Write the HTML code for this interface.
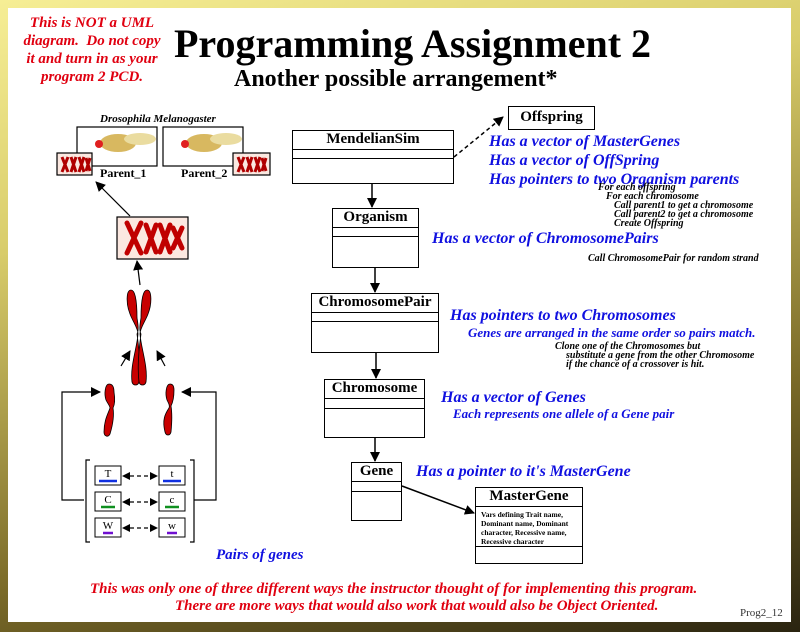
<!DOCTYPE html>
<html><head><meta charset="utf-8"><style>
html,body{margin:0;padding:0}
body{width:800px;height:632px;position:relative;overflow:hidden;background:linear-gradient(165deg,#f6ee95 0%,#d8cc6a 30%,#7a6a28 70%,#2a2410 100%);font-family:"Liberation Serif",serif}
#w{position:absolute;left:8px;top:8px;width:783px;height:614px;background:#fff}
.t{position:absolute;white-space:nowrap;font-weight:bold}
.bi{font-style:italic;font-weight:bold}
.blue{color:#1010e0}
.red{color:#e00010}
.box{position:absolute;border:1.5px solid #000;background:#fff;box-sizing:border-box}
.box .h{border-bottom:1.5px solid #000;text-align:center;font-weight:bold;font-size:15px;line-height:17px}
.box .m{border-bottom:1.5px solid #000}
.sm{font-size:10px;font-style:italic;font-weight:bold;line-height:10px}
</style></head><body>
<div id="w"></div>
<div class="t red bi" style="left:18px;top:14px;width:148px;text-align:center;font-size:15px;line-height:18px;white-space:normal">This is NOT a UML diagram.&nbsp; Do not copy it and turn in as your program 2 PCD.</div>
<div class="t" style="left:174px;top:21px;font-size:40px;line-height:46px">Programming Assignment 2</div>
<div class="t" style="left:234px;top:66px;font-size:24px;line-height:26px">Another possible arrangement*</div>

<svg style="position:absolute;left:0;top:0" width="800" height="632">
<defs><marker id="a" markerWidth="10" markerHeight="10" refX="9" refY="5" orient="auto" markerUnits="userSpaceOnUse"><path d="M0,0L10,5L0,10z" fill="#000"/></marker></defs>
<line x1="372" y1="183" x2="372" y2="207" stroke="#000" stroke-width="1.5" marker-end="url(#a)"/>
<line x1="375" y1="267" x2="375" y2="292" stroke="#000" stroke-width="1.5" marker-end="url(#a)"/>
<line x1="376" y1="352" x2="376" y2="378" stroke="#000" stroke-width="1.5" marker-end="url(#a)"/>
<line x1="375" y1="437" x2="375" y2="461" stroke="#000" stroke-width="1.5" marker-end="url(#a)"/>
<line x1="402" y1="486" x2="474" y2="513" stroke="#000" stroke-width="1.5" marker-end="url(#a)"/>
<line x1="454" y1="157" x2="503" y2="117" stroke="#000" stroke-width="1.5" stroke-dasharray="4,3" marker-end="url(#a)"/>
<rect x="77" y="127" width="80" height="39" fill="#fff" stroke="#000" stroke-width="1.2"/>
<rect x="163" y="127" width="80" height="39" fill="#fff" stroke="#000" stroke-width="1.2"/>
<g fill="#d8b860"><ellipse cx="118" cy="143" rx="18" ry="9"/><ellipse cx="140" cy="139" rx="16" ry="6" fill="#eadca0"/><circle cx="99" cy="144" r="4" fill="#e02020"/><ellipse cx="204" cy="143" rx="18" ry="9"/><ellipse cx="226" cy="139" rx="16" ry="6" fill="#eadca0"/><circle cx="185" cy="144" r="4" fill="#e02020"/></g>
<rect x="57" y="153" width="35" height="22" fill="#fbe8e0" stroke="#000" stroke-width="1.2"/>
<rect x="233" y="153" width="37" height="22" fill="#fbe8e0" stroke="#000" stroke-width="1.2"/>
<g stroke="#b00000" stroke-width="3"><path d="M62,157l6,15M68,157l-6,15M71,157l5,15M76,157l-5,15M79,157l5,15M84,157l-5,15M86,158l4,13M90,158l-4,13"/><path d="M238,157l6,15M244,157l-6,15M247,157l5,15M252,157l-5,15M255,157l5,15M260,157l-5,15M262,158l4,13M266,158l-4,13"/></g>
<line x1="130" y1="216" x2="96" y2="182" stroke="#000" stroke-width="1.2" marker-end="url(#a)"/>
<rect x="117" y="217" width="71" height="42" fill="#fbe8e0" stroke="#000" stroke-width="1.2"/>
<g stroke="#c00000" stroke-width="5" stroke-linecap="round"><path d="M127,223l14,30M141,223l-14,30M146,225l10,27M156,225l-10,27M160,225l10,27M170,225l-10,27M173,228l9,20M182,228l-9,20"/></g>
<line x1="140" y1="285" x2="137" y2="261" stroke="#000" stroke-width="1.2" marker-end="url(#a)"/>
<g fill="#c80000" stroke="#000" stroke-width=".8">
<path d="M131,290c-5,0-5,14-1,24c3,8 8,14 8,20c-1,14-8,32-6,48c1,4 6,4 7,0c2-16 0-34-2-48c2-4 1-10 0-16c0-12-1-28-6-28z"/>
<path d="M147,290c5,0 5,14 1,24c-3,8-8,14-8,20c1,14 8,32 6,48c-1,4-6,4-7,0c-2-16 0-34 2-48c-2-4-1-10 0-16c0-12 1-28 6-28z"/>
</g>
<line x1="121" y1="366" x2="130" y2="351" stroke="#000" stroke-width="1.2" marker-end="url(#a)"/>
<line x1="165" y1="366" x2="157" y2="351" stroke="#000" stroke-width="1.2" marker-end="url(#a)"/>
<g fill="#c80000" stroke="#000" stroke-width=".8"><path d="M109,384c-4,0-5,10-3,16c2,4 4,6 4,8c-2,6-6,12-6,24c0,4 4,6 6,2c3-10 4-20 3-26c2-4 2-10 1-16c0-6-2-8-5-8z"/><path d="M170,384c-4,0-5,10-3,16c2,4 3,6 2,8c-4,6-7,12-4,24c1,4 5,4 6,0c1-10 1-20 0-26c2-4 3-10 3-16c0-4-1-6-4-6z"/></g>
<path d="M84,500H62V392H100" fill="none" stroke="#000" stroke-width="1.2" marker-end="url(#a)"/>
<path d="M194,500H216V392H182" fill="none" stroke="#000" stroke-width="1.2" marker-end="url(#a)"/>
<path d="M90,460H86V542H90M190,460H194V542H190" fill="none" stroke="#000" stroke-width="1.2"/>
<g fill="#fff" stroke="#000" stroke-width="1"><rect x="95" y="466" width="26" height="19"/><rect x="159" y="466" width="26" height="19"/><rect x="95" y="492" width="26" height="19"/><rect x="159" y="492" width="26" height="19"/><rect x="95" y="518" width="26" height="19"/><rect x="159" y="518" width="26" height="19"/></g>
<g stroke-width="2.5"><line x1="99" y1="481" x2="117" y2="481" stroke="#1030e0"/><line x1="163" y1="481" x2="181" y2="481" stroke="#1030e0"/><line x1="101" y1="507" x2="115" y2="507" stroke="#109020"/><line x1="165" y1="507" x2="179" y2="507" stroke="#109020"/><line x1="103" y1="533" x2="113" y2="533" stroke="#7010d0"/><line x1="167" y1="533" x2="177" y2="533" stroke="#7010d0"/></g>
<g font-family="Liberation Serif" font-size="11" text-anchor="middle"><text x="108" y="477">T</text><text x="172" y="477">t</text><text x="108" y="503">C</text><text x="172" y="503">c</text><text x="108" y="529">W</text><text x="172" y="529">w</text></g>
<g stroke="#000" stroke-width="1.2" stroke-dasharray="4,3"><line x1="130" y1="476" x2="150" y2="476"/><line x1="130" y1="502" x2="150" y2="502"/><line x1="130" y1="528" x2="150" y2="528"/></g>
<g fill="#000"><path d="M122,476l8-4v8z"/><path d="M158,476l-8-4v8z"/><path d="M122,502l8-4v8z"/><path d="M158,502l-8-4v8z"/><path d="M122,528l8-4v8z"/><path d="M158,528l-8-4v8z"/></g>
</svg>

<div class="t bi" style="left:100px;top:113px;font-size:11px">Drosophila Melanogaster</div>
<div class="t" style="left:100px;top:166px;font-size:12px">Parent_1</div>
<div class="t" style="left:181px;top:166px;font-size:12px">Parent_2</div>

<div class="box" style="left:508px;top:106px;width:87px;height:24px"><div class="h" style="border:0;line-height:20px">Offspring</div></div>
<div class="box" style="left:292px;top:130px;width:162px;height:54px"><div class="h" style="height:18px">MendelianSim</div><div class="m" style="height:8px"></div></div>
<div class="box" style="left:332px;top:208px;width:87px;height:60px"><div class="h" style="height:18px">Organism</div><div class="m" style="height:8px"></div></div>
<div class="box" style="left:311px;top:293px;width:128px;height:60px"><div class="h" style="height:18px">ChromosomePair</div><div class="m" style="height:8px"></div></div>
<div class="box" style="left:324px;top:379px;width:101px;height:59px"><div class="h" style="height:18px">Chromosome</div><div class="m" style="height:9px"></div></div>
<div class="box" style="left:351px;top:462px;width:51px;height:59px"><div class="h" style="height:18px">Gene</div><div class="m" style="height:9px"></div></div>
<div class="box" style="left:475px;top:487px;width:108px;height:77px"><div class="h" style="height:18px">MasterGene</div><div class="m" style="height:40px;font-size:7.5px;font-weight:bold;line-height:9px;padding:3px 0 0 5px;box-sizing:border-box">Vars defining Trait name, Dominant name, Dominant character, Recessive name, Recessive character</div></div>

<div class="t bi blue" style="left:489px;top:132px;font-size:16px;line-height:19px">Has a vector of MasterGenes<br>Has a vector of OffSpring<br>Has pointers to two Organism parents</div>
<div class="t sm" style="left:598px;top:183px">For each offspring</div>
<div class="t sm" style="left:606px;top:192px">For each chromosome</div>
<div class="t sm" style="left:614px;top:201px">Call parent1 to get a chromosome</div>
<div class="t sm" style="left:614px;top:210px">Call parent2 to get a chromosome</div>
<div class="t sm" style="left:614px;top:219px">Create Offspring</div>
<div class="t bi blue" style="left:432px;top:230px;font-size:16px">Has a vector of ChromosomePairs</div>
<div class="t sm" style="left:588px;top:254px">Call ChromosomePair for random strand</div>
<div class="t bi blue" style="left:450px;top:307px;font-size:16px">Has pointers to two Chromosomes</div>
<div class="t bi blue" style="left:468px;top:325px;font-size:13px">Genes are arranged in the same order so pairs match.</div>
<div class="t sm" style="left:555px;top:342px">Clone one of the Chromosomes but</div>
<div class="t sm" style="left:566px;top:351px">substitute a gene from the other Chromosome</div>
<div class="t sm" style="left:566px;top:360px">if the chance of a crossover is hit.</div>
<div class="t bi blue" style="left:441px;top:389px;font-size:16px">Has a vector of Genes</div>
<div class="t bi blue" style="left:453px;top:406px;font-size:13px">Each represents one allele of a Gene pair</div>
<div class="t bi blue" style="left:416px;top:463px;font-size:16px">Has a pointer to it's MasterGene</div>
<div class="t bi blue" style="left:216px;top:547px;font-size:15px">Pairs of genes</div>
<div class="t bi red" style="left:90px;top:581px;font-size:15px">This was only one of three different ways the instructor thought of for implementing this program.</div>
<div class="t bi red" style="left:175px;top:598px;font-size:15px">There are more ways that would also work that would also be Object Oriented.</div>
<div class="t" style="left:740px;top:607px;font-size:11px;font-weight:normal;color:#333">Prog2_12</div>
</body></html>
